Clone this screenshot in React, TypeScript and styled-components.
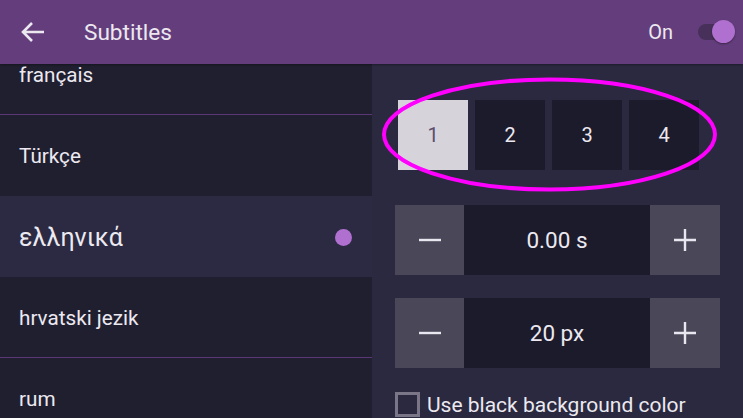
import React, { useState } from 'react'
import styled, { createGlobalStyle } from 'styled-components'

const Global = createGlobalStyle`
  html, body {
    margin: 0;
    padding: 0;
    background: #201f30;
    font-family: Roboto, 'Noto Sans', 'DejaVu Sans', sans-serif;
  }
  * { box-sizing: border-box; }
`

const Screen = styled.div`
  width: 743px;
  height: 418px;
  display: flex;
  flex-direction: column;
  overflow: hidden;
  position: relative;
`

const Header = styled.div`
  height: 64px;
  flex: none;
  background: #643e7c;
  display: flex;
  align-items: center;
  padding: 0 11px 0 20px;
  color: #ece8f0;
  position: relative;
  z-index: 2;
  box-shadow: 0 1px 2px rgba(0, 0, 0, 0.35);
`

const BackButton = styled.div`
  width: 26px;
  height: 26px;
  display: flex;
  align-items: center;
`

const Title = styled.div`
  margin-left: 38px;
  font-size: 22.6px;
  flex: 1;
`

const ToggleLabel = styled.div`
  font-size: 20px;
  margin-right: 25px;
`

const Track = styled.div`
  width: 34px;
  height: 16px;
  border-radius: 8px;
  background: #47305a;
  position: relative;
`

const Thumb = styled.div<{ on: boolean }>`
  position: absolute;
  top: -4px;
  left: ${({ on }) => (on ? '14px' : '-4px')};
  width: 23px;
  height: 23px;
  border-radius: 50%;
  background: #b070d0;
  box-shadow: 0 1px 2px rgba(0, 0, 0, 0.4);
`

const Body = styled.div`
  flex: 1;
  display: flex;
  min-height: 0;
`

const List = styled.div`
  width: 372px;
  flex: none;
  overflow: hidden;
  background: #201f30;
`

const ListInner = styled.div`
  margin-top: -30px;
`

const Item = styled.div<{ selected?: boolean; divider?: boolean }>`
  height: 81px;
  display: flex;
  align-items: center;
  justify-content: space-between;
  padding: 2px 20px 0 19px;
  color: #ece9f0;
  font-size: ${({ selected }) => (selected ? '25px' : '20.7px')};
  background: ${({ selected }) => (selected ? '#2b2a42' : '#201f30')};
  border-bottom: 1px solid ${({ divider }) => (divider ? '#5b3775' : 'transparent')};
`

const Dot = styled.span`
  width: 17px;
  height: 17px;
  border-radius: 50%;
  background: #b070d0;
`

const Panel = styled.div`
  flex: 1;
  background: #2a2940;
  padding: 36px 23px 0 23px;
  display: flex;
  flex-direction: column;
`

const TrackRow = styled.div`
  display: flex;
  gap: 7px;
  margin-left: 3px;
`

const TrackButton = styled.div<{ active?: boolean }>`
  width: 70px;
  height: 70px;
  display: flex;
  align-items: center;
  justify-content: center;
  font-size: 20px;
  background: ${({ active }) => (active ? '#d6d4da' : '#1c1b2c')};
  color: ${({ active }) => (active ? '#5d4d6e' : '#ece9f0')};
`

const Stepper = styled.div<{ top: number }>`
  margin-top: ${({ top }) => top}px;
  display: grid;
  grid-template-columns: 69px 1fr 70px;
  height: 70px;
  width: 325px;
`

const StepButton = styled.div`
  background: #4a4858;
  display: flex;
  align-items: center;
  justify-content: center;
`

const StepValue = styled.div`
  background: #1c1b2c;
  display: flex;
  align-items: center;
  justify-content: center;
  color: #ece9f0;
  font-size: 22.5px;
`

const CheckRow = styled.label`
  margin-top: 24px;
  display: flex;
  align-items: center;
  gap: 7px;
  color: #ece9f0;
  font-size: 21px;
`

const Box = styled.span`
  width: 25px;
  height: 25px;
  border: 3px solid #7a7688;
  background: #2a2940;
  flex: none;
`

const Mark = styled.svg`
  position: absolute;
  left: 0;
  top: 0;
  pointer-events: none;
  z-index: 3;
`

const Minus = () => (
  <svg width="24" height="24" viewBox="0 0 24 24">
    <path d="M1 12h22" stroke="#e8e6ee" strokeWidth="2.4" />
  </svg>
)

const Plus = () => (
  <svg width="24" height="24" viewBox="0 0 24 24">
    <path d="M1 12h22M12 1v22" stroke="#e8e6ee" strokeWidth="2.4" />
  </svg>
)

const languages = ['français', 'Türkçe', 'ελληνικά', 'hrvatski jezik', 'rum']

export default function App() {
  const [selected] = useState(2)
  const [track] = useState(1)
  const [on] = useState(true)

  return (
    <Screen>
      <Global />
      <Header>
        <BackButton>
          <svg width="26" height="22" viewBox="0 0 26 22">
            <path d="M24 11H3M12 2l-9 9 9 9" stroke="#ece8f0" strokeWidth="2.6" fill="none" />
          </svg>
        </BackButton>
        <Title>Subtitles</Title>
        <ToggleLabel>{on ? 'On' : 'Off'}</ToggleLabel>
        <Track>
          <Thumb on={on} />
        </Track>
      </Header>
      <Body>
        <List>
          <ListInner>
            {languages.map((lang, i) => (
              <Item
                key={lang}
                selected={i === selected}
                divider={i !== selected && i + 1 !== selected}
              >
                {lang}
                {i === selected && <Dot />}
              </Item>
            ))}
          </ListInner>
        </List>
        <Panel>
          <TrackRow>
            {[1, 2, 3, 4].map((n) => (
              <TrackButton key={n} active={n === track}>
                {n}
              </TrackButton>
            ))}
          </TrackRow>
          <Stepper top={35}>
            <StepButton>
              <Minus />
            </StepButton>
            <StepValue>0.00 s</StepValue>
            <StepButton>
              <Plus />
            </StepButton>
          </Stepper>
          <Stepper top={23}>
            <StepButton>
              <Minus />
            </StepButton>
            <StepValue>20 px</StepValue>
            <StepButton>
              <Plus />
            </StepButton>
          </Stepper>
          <CheckRow>
            <Box />
            Use black background color
          </CheckRow>
        </Panel>
      </Body>
      <Mark width="743" height="418">
        <ellipse cx="549.5" cy="134.5" rx="165.5" ry="55" fill="none" stroke="#ff00ff" strokeWidth="4" />
      </Mark>
    </Screen>
  )
}
